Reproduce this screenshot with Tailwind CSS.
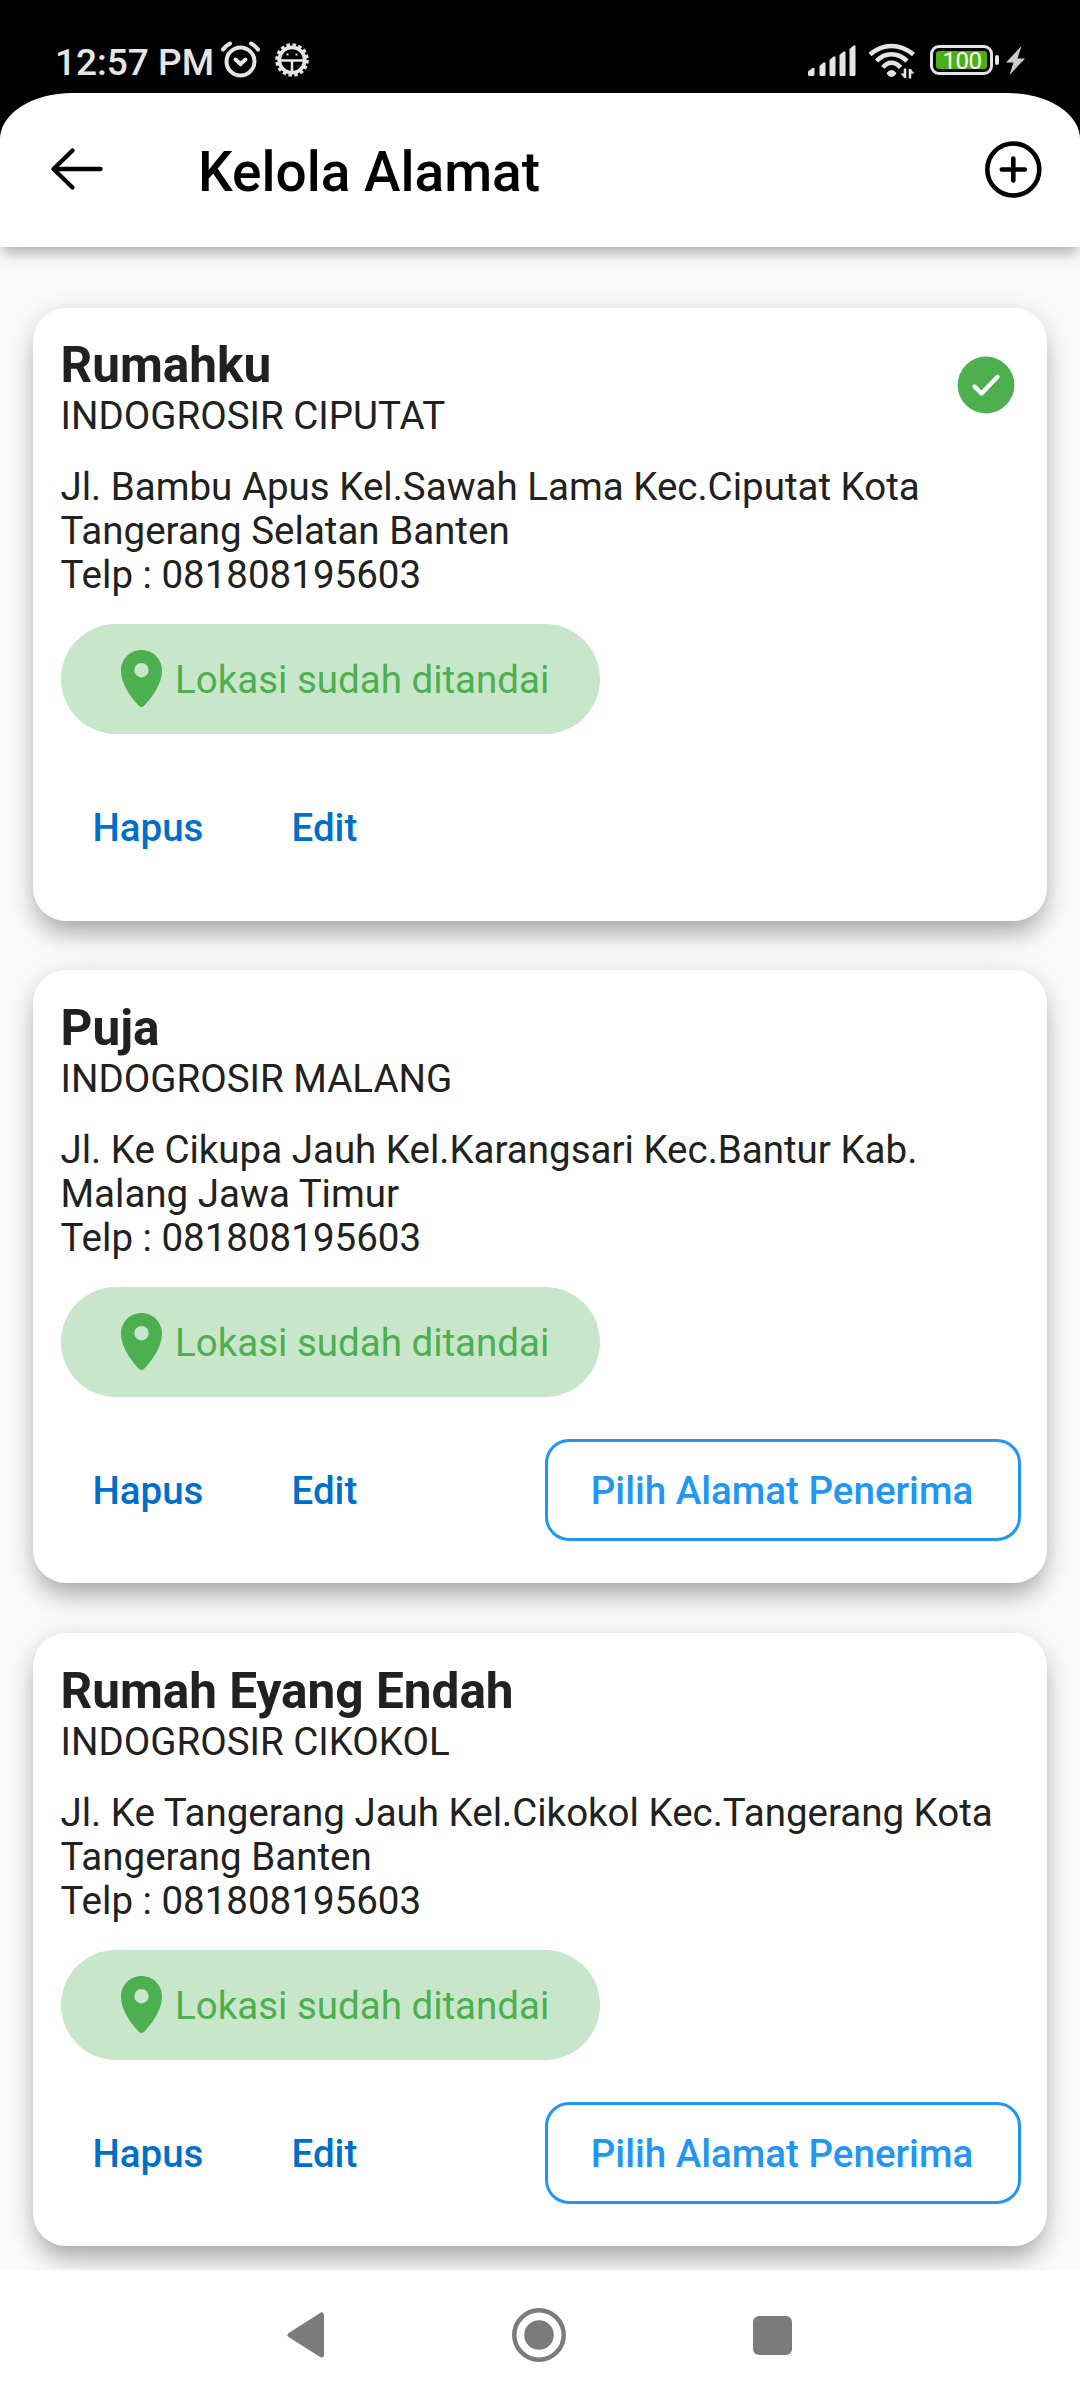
<!DOCTYPE html>
<html lang="id">
<head>
<meta charset="utf-8">
<title>Kelola Alamat</title>
<script src="https://cdn.jsdelivr.net/npm/@tailwindcss/browser@4"></script>
</head>
<body class="bg-black">
<svg class="hidden">
  <symbol id="pin" viewBox="0 0 41 57"><path fill-rule="evenodd" d="M20.500 0C9 0 0 9 0 20.500C0 33 8 45 17.800 55.700Q20.500 58.300 23.200 55.700C33 45 41 33 41 20.500C41 9 32 0 20.500 0ZM20.500 13a7.200 7.200 0 1 1 0 14.400a7.200 7.200 0 1 1 0-14.400Z"/></symbol>
</svg>
<div class="flex h-[2400px] w-[1080px] flex-col overflow-hidden font-[Roboto,sans-serif] text-[#212121]">
  <!-- Status bar -->
  <div class="flex h-[93px] shrink-0 items-start text-[#e5e5e5]">
    <span class="ml-[55px] mt-[41px] w-[165px] whitespace-nowrap text-[37px] leading-[44px] font-medium">12:57 PM</span>
    <svg class="mt-[41px] h-[38px] w-[42px]" viewBox="0 0 42 38" fill="none" stroke="currentColor" stroke-linecap="round"><circle cx="20.500" cy="20.500" r="14" stroke-width="4"/><path d="M15.500 18.500l5 4.500l5-4.500" stroke-width="4"/><path d="M3 8.500Q5.500 5 10 2.500M38 8.500Q35.500 5 31 2.500" stroke-width="4"/></svg>
    <svg class="ml-[12px] mt-[42px] h-[36px] w-[36px]" viewBox="0 0 36 36" fill="none" stroke="currentColor"><circle cx="18" cy="18" r="12.700" stroke-width="3.800"/><circle cx="18" cy="18" r="15" stroke-width="3.600" stroke-dasharray="3.400 2.490"/><path d="M5 18.500h26M18 19v13" stroke-width="2.500"/><path d="M12.500 12.500h2M21.500 12.500h2" stroke-width="2"/></svg>
    <svg class="ml-[498px] mt-[45px] h-[32px] w-[48px]" viewBox="0 0 48 32" fill="currentColor"><path d="M0 29.500V26.500L4.500 23H6.500V29.500Q6.500 31 5 31H1.500Q0 31 0 29.500ZM11.500 21L15.500 17.500H17.500V29.500Q17.500 31 16 31H13Q11.500 31 11.500 29.500ZM21.500 15L25.500 11.500H27.500V29.500Q27.500 31 26 31H23Q21.500 31 21.500 29.500ZM31.500 10L35.500 6.500H37.500V29.500Q37.500 31 36 31H33Q31.500 31 31.500 29.500ZM41.500 4L45.500 .5H47.500V29.500Q47.500 31 46 31H43Q41.500 31 41.500 29.500Z"/></svg>
    <svg class="ml-[12px] mt-[42px] h-[38px] w-[48px]" viewBox="0 0 48 38" fill="none" stroke="currentColor"><path d="M2 12.500Q12 4 23.500 4T45.500 12.500M8.500 19Q15 12.300 23.500 12.300T39 19M15 25.500Q18.500 20.800 23.500 20.800T32.500 25.500" stroke-width="4.600"/><path fill="currentColor" stroke="none" d="M18.500 31Q23.500 25 28.500 31Q27 34.500 23.500 35Q20 34.500 18.500 31Z"/><path d="M37 26.500V36M42 27V36.500" stroke-width="2.600"/><path fill="currentColor" stroke="none" d="M32.500 31.500H37V36.500ZM46.500 31.500H42V26.500Z"/></svg>
    <div class="ml-[14px] mt-[45px] flex h-[30px] w-[63px] rounded-[9px] border-[3px] border-[#e5e5e5] p-[3px]">
      <div class="flex grow items-center justify-center rounded-[3px] bg-[#4caf14]"><span class="pt-[2px] pl-[1px] text-[24px] leading-[17px] tracking-[-0.5px] text-white">100</span></div>
    </div>
    <div class="ml-[2px] mt-[55px] h-[10px] w-[4px] rounded-[2px] bg-[#e5e5e5]"></div>
    <svg class="ml-[7px] mt-[46px] h-[29px] w-[19px]" viewBox="0 0 19 29" fill="#cccccc"><path d="M15.500 0L0 16.500H7.500L3.500 29L19 12.500H11.500Z"/></svg>
  </div>

  <!-- App bar -->
  <div class="relative z-10 flex h-[154px] shrink-0 items-center rounded-t-[72px_46px] bg-white shadow-[0_9px_14px_-3px_rgba(0,0,0,0.22),0_3px_20px_0_rgba(0,0,0,0.14)]">
    <svg class="ml-[50px] h-[46px] w-[54px]" viewBox="0 0 54 46" fill="none" stroke="#000" stroke-width="4.300" stroke-linecap="round" stroke-linejoin="round"><path d="M50.500 22H4M22.500 3.500L3.500 22L22.500 40.500"/></svg>
    <h1 class="ml-[94px] mt-[4px] text-[55px] leading-[64px] font-medium text-black">Kelola Alamat</h1>
    <svg class="mr-[37px] mb-[3px] ml-auto h-[60px] w-[60px]" viewBox="0 0 60 60" fill="none" stroke="#000" stroke-linecap="round"><circle cx="30.300" cy="30.500" r="26" stroke-width="4.600"/><path d="M18.800 30.500h23M30.300 19.500v22" stroke-width="4.600"/></svg>
  </div>

  <!-- Address list -->
  <div class="flex h-[2023px] shrink-0 flex-col gap-[49.500px] overflow-hidden bg-[#fafafa] px-[33px] pt-[60.500px]">

    <section class="flex h-[613px] shrink-0 flex-col rounded-[33px] bg-white px-[27.500px] pt-[28.500px] pb-[42px] shadow-[0_17px_26px_-5px_rgba(0,0,0,0.27),0_4px_28px_0_rgba(0,0,0,0.12)]">
      <div class="flex items-start justify-between">
        <div>
          <h2 class="text-[49.500px] leading-[58px] font-bold">Rumahku</h2>
          <p class="text-[38.500px] leading-[44px]">INDOGROSIR CIPUTAT</p>
        </div>
        <svg class="mt-[20px] mr-[5px] h-[58px] w-[58px]" viewBox="0 0 58 58"><circle cx="29" cy="29" r="28.400" fill="#4caf50"/><path d="M17.500 30.500l7 7L40.500 20.800" fill="none" stroke="#fff" stroke-width="4.300" stroke-linecap="round" stroke-linejoin="round"/></svg>
      </div>
      <p class="mt-[27px] text-[38.500px] leading-[44px] whitespace-nowrap">Jl. Bambu Apus Kel.Sawah Lama Kec.Ciputat Kota<br>Tangerang Selatan Banten<br>Telp : 081808195603</p>
      <div class="mt-[26.500px] flex h-[110px] w-[539.500px] items-center rounded-full bg-[#c8e6c9] pl-[60.500px] text-[#4caf50]">
        <svg class="h-[57px] w-[41px]" fill="currentColor"><use href="#pin"/></svg>
        <span class="ml-[13px] pt-[3px] text-[38.500px] leading-[44px]">Lokasi sudah ditandai</span>
      </div>
      <div class="mt-auto flex h-[102px] items-center text-[38.500px] font-medium text-[#006fc9]">
        <span class="w-[231px] pl-[32px]">Hapus</span><span>Edit</span>
      </div>
    </section>

    <section class="flex h-[613px] shrink-0 flex-col rounded-[33px] bg-white px-[27.500px] pt-[28.500px] pb-[42px] shadow-[0_17px_26px_-5px_rgba(0,0,0,0.27),0_4px_28px_0_rgba(0,0,0,0.12)]">
      <h2 class="text-[49.500px] leading-[58px] font-bold">Puja</h2>
      <p class="text-[38.500px] leading-[44px]">INDOGROSIR MALANG</p>
      <p class="mt-[27px] text-[38.500px] leading-[44px] whitespace-nowrap">Jl. Ke Cikupa Jauh Kel.Karangsari Kec.Bantur Kab.<br>Malang Jawa Timur<br>Telp : 081808195603</p>
      <div class="mt-[27px] flex h-[110px] w-[539.500px] items-center rounded-full bg-[#c8e6c9] pl-[60.500px] text-[#4caf50]">
        <svg class="h-[57px] w-[41px]" fill="currentColor"><use href="#pin"/></svg>
        <span class="ml-[13px] pt-[3px] text-[38.500px] leading-[44px]">Lokasi sudah ditandai</span>
      </div>
      <div class="mt-auto flex h-[102px] items-center text-[38.500px] font-medium text-[#006fc9]">
        <span class="w-[231px] pt-[1px] pl-[32px]">Hapus</span><span class="pt-[1px]">Edit</span>
        <div class="mr-[-1px] ml-auto flex h-[102px] w-[476px] items-center justify-center rounded-[24px] border-[3px] border-[#2196f3] pt-[1px] pr-[1px] text-[#2196f3]">Pilih Alamat Penerima</div>
      </div>
    </section>

    <section class="flex h-[613px] shrink-0 flex-col rounded-[33px] bg-white px-[27.500px] pt-[29.500px] pb-[42px] shadow-[0_17px_26px_-5px_rgba(0,0,0,0.27),0_4px_28px_0_rgba(0,0,0,0.12)]">
      <h2 class="text-[49.500px] leading-[58px] font-bold">Rumah Eyang Endah</h2>
      <p class="text-[38.500px] leading-[44px]">INDOGROSIR CIKOKOL</p>
      <p class="mt-[27px] text-[38.500px] leading-[44px] whitespace-nowrap">Jl. Ke Tangerang Jauh Kel.Cikokol Kec.Tangerang Kota<br>Tangerang Banten<br>Telp : 081808195603</p>
      <div class="mt-[26.500px] flex h-[110px] w-[539.500px] items-center rounded-full bg-[#c8e6c9] pl-[60.500px] text-[#4caf50]">
        <svg class="h-[57px] w-[41px]" fill="currentColor"><use href="#pin"/></svg>
        <span class="ml-[13px] pt-[3px] text-[38.500px] leading-[44px]">Lokasi sudah ditandai</span>
      </div>
      <div class="mt-auto flex h-[102px] items-center text-[38.500px] font-medium text-[#006fc9]">
        <span class="w-[231px] pt-[2px] pl-[32px]">Hapus</span><span class="pt-[2px]">Edit</span>
        <div class="mr-[-1px] ml-auto flex h-[102px] w-[476px] items-center justify-center rounded-[24px] border-[3px] border-[#2196f3] pt-[2px] pr-[1px] text-[#2196f3]">Pilih Alamat Penerima</div>
      </div>
    </section>
  </div>

  <!-- System navigation -->
  <div class="flex h-[130px] shrink-0 items-center bg-white text-[#7b7b7b]">
    <svg class="ml-[287px] h-[48px] w-[38px]" viewBox="0 0 38 48" fill="currentColor" stroke="currentColor" stroke-width="5" stroke-linejoin="round"><path d="M34.500 4V44L3 24Z"/></svg>
    <svg class="ml-[187px] h-[56px] w-[54px]" viewBox="0 0 54 56" fill="none" stroke="currentColor"><circle cx="27" cy="28" r="24.700" stroke-width="4.500"/><circle cx="27" cy="28" r="14.800" fill="currentColor" stroke="none"/></svg>
    <div class="ml-[187px] h-[39px] w-[39px] rounded-[6px] bg-[#7b7b7b]"></div>
  </div>
</div>
</body>
</html>
